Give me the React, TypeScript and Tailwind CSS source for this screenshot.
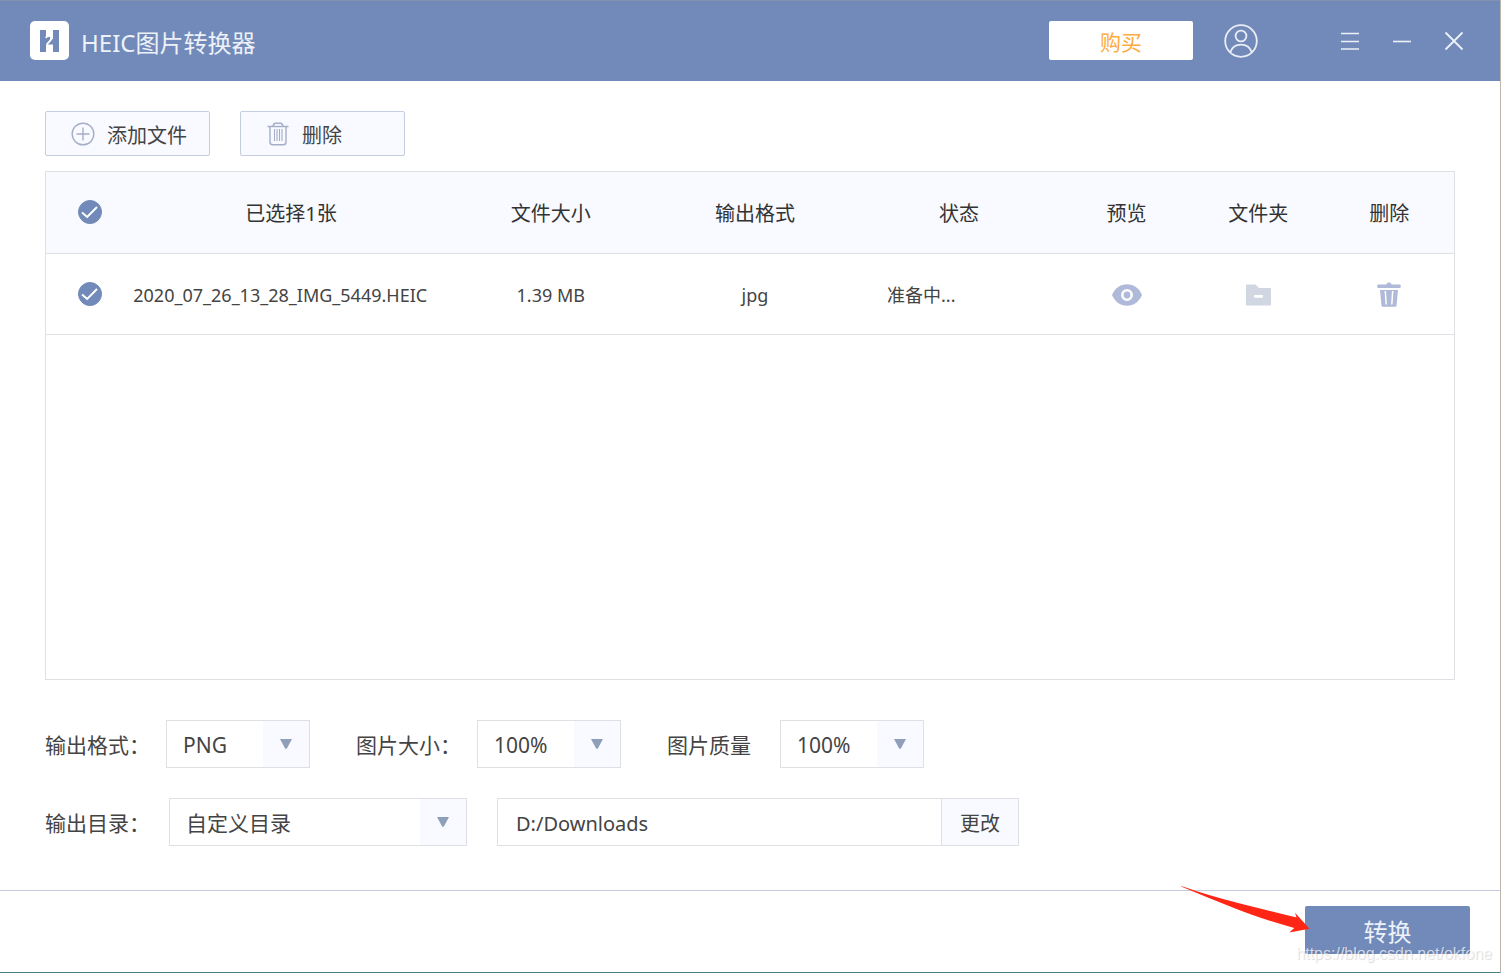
import { useState } from "react";
import type { ReactNode } from "react";

function Logo() {
  return (
    <svg viewBox="0 0 39 39" className="size-[39px]" aria-hidden="true">
      <rect width="39" height="39" rx="5" fill="#fff" />
      <path d="M10 9h6v8.500l3-2.200c1.600-1 3.200.4 2.200 2L16 24v7h-6z" fill="#728ab9" />
      <path d="M23 9h6v22h-6v-7.500h-5.200l5.200-6z" fill="#728ab9" />
      <path d="M15.600 16.600c1.600-2.600 6-2 5.400 1.200-.4 2-2.600 3.600-4.200 5.400" fill="none" stroke="#fff" strokeWidth="1.600" />
    </svg>
  );
}

function UserIcon() {
  return (
    <svg viewBox="0 0 34 34" className="size-[34px]" fill="none" stroke="#e9edf5" strokeWidth="1.8" aria-hidden="true">
      <circle cx="17" cy="17" r="15.8" />
      <circle cx="17" cy="12" r="5.4" />
      <path d="M6.2 28.300C7.800 23.600 12 20.600 17 20.600s9.200 3 10.800 7.700" />
    </svg>
  );
}

function PlusCircle() {
  return (
    <svg viewBox="0 0 24 24" className="size-6" fill="none" stroke="#a5aec8" strokeWidth="1.4" aria-hidden="true">
      <circle cx="12" cy="12" r="10.8" />
      <path d="M12 5.500v13M5.500 12h13" />
    </svg>
  );
}

function TrashOutline() {
  return (
    <svg viewBox="0 0 24 24" className="size-6" fill="none" stroke="#a5aec8" strokeWidth="1.4" aria-hidden="true">
      <path d="M1.500 4.500h21M7 4.500C7.200 2 8 1.200 9.500 1.200h5C16 1.200 16.800 2 17 4.500" />
      <path d="M4 4.500v15.500c0 1.800 1 2.800 2.800 2.800h10.400c1.800 0 2.800-1 2.800-2.800V4.500" />
      <path d="M8.500 7v12M11 7v12M13.500 7v12M16 7v12" strokeWidth="1.100" />
    </svg>
  );
}

function EyeIcon() {
  return (
    <svg viewBox="0 0 30 22" className="h-[22px] w-[30px]" aria-hidden="true">
      <path d="M0 11C3 4 8.500.3 15 .3S27 4 30 11c-3 7-8.500 10.700-15 10.700S3 18 0 11z" fill="#afb9d9" />
      <circle cx="15" cy="11" r="4.700" fill="#afb9d9" stroke="#fff" strokeWidth="2.600" />
    </svg>
  );
}

function FolderIcon() {
  return (
    <svg viewBox="0 0 25 22" className="h-[22px] w-[25px]" aria-hidden="true">
      <path d="M1 .5h8.500L13 4h11c.6 0 1 .4 1 1v15.500c0 .6-.4 1-1 1H1c-.6 0-1-.4-1-1v-19c0-.6.4-1 1-1z" fill="#d1d6e3" />
      <rect x="8" y="11" width="9" height="2.800" rx="1" fill="#fff" />
    </svg>
  );
}

function TrashSolid() {
  return (
    <svg viewBox="0 0 24 25" className="h-[25px] w-6" aria-hidden="true">
      <path d="M9.500 2.500C9.800 1 10.800.5 12 .5s2.200.5 2.500 2h8c.8 0 1.300.6 1.300 1.700s-.5 1.800-1.300 1.800h-21C.7 6 .2 5.300.2 4.200s.5-1.700 1.300-1.700z" fill="#afb9d9" />
      <path d="M3 8h18l-1.500 15.500c-.1.800-.5 1.200-1.200 1.200H5.700c-.7 0-1.100-.4-1.200-1.200z" fill="#afb9d9" />
      <path d="M8.300 9l.9 13.500M15.700 9l-.9 13.500" stroke="#fff" strokeWidth="1.500" />
    </svg>
  );
}

function RoundCheck({ label, checked, onChange }: { label: string; checked: boolean; onChange: () => void }) {
  return (
    <label className="mx-auto grid size-6 cursor-pointer place-items-center">
      <input
        type="checkbox"
        aria-label={label}
        checked={checked}
        onChange={onChange}
        className="col-start-1 row-start-1 size-6 appearance-none rounded-full border border-[#728ab9] checked:bg-[#728ab9]"
      />
      <svg viewBox="0 0 24 24" className="pointer-events-none col-start-1 row-start-1 size-6" fill="none" stroke="#fff" strokeWidth="2" aria-hidden="true">
        <path d="M4 12.500l5.200 4.500L19 7" />
      </svg>
    </label>
  );
}

function Dropdown({ id, options, width }: { id: string; options: string[]; width: string }) {
  return (
    <div className={`grid h-12 border border-[#dfe0e3] ${width}`}>
      <select id={id} className="col-start-1 row-start-1 h-full w-full appearance-none bg-transparent pt-1 pr-12 pl-4 text-[21px] text-[#444]">
        {options.map((o) => (
          <option key={o}>{o}</option>
        ))}
      </select>
      <span className="pointer-events-none col-start-1 row-start-1 flex w-[46px] items-center justify-center justify-self-end bg-[#f8faff]">
        <svg viewBox="0 0 12 10" className="h-[10px] w-3" fill="#8f9fb9" aria-hidden="true">
          <path d="M0 0h12L7 9.200q-1 1.200-2 0z" />
        </svg>
      </span>
    </div>
  );
}

function ToolButton({ icon, children }: { icon: ReactNode; children: ReactNode }) {
  return (
    <button className="flex h-[45px] w-[165px] items-center gap-3 rounded-xs border border-[#c5cde0] bg-[#f8faff] pl-[25px] text-[20px] text-[#444]">
      {icon}
      <span className="pt-1">{children}</span>
    </button>
  );
}

export default function App() {
  const [selected, setSelected] = useState(true);
  const toggle = () => setSelected(!selected);

  return (
    <div className="flex min-h-screen flex-col border-r border-b border-r-[#bdb6ad] border-b-[#4c808b] bg-white font-['Noto_Sans','Noto_Sans_CJK_SC',sans-serif] text-[#444]">
      <header className="flex h-[81px] shrink-0 items-center border-t border-[#8291ae] bg-[#728ab9] pr-9 pb-px pl-[30px] text-white">
        <Logo />
        <h1 className="ml-3 pt-1 text-[24px] leading-8 text-[#edf1f8]">HEIC图片转换器</h1>
        <div className="ml-auto flex items-center">
          <button className="h-[39px] w-36 rounded-xs bg-white pt-1 text-[21px] text-[#fdab3d]">购买</button>
          <button aria-label="账户" className="ml-[31px]">
            <UserIcon />
          </button>
          <div className="ml-[82px] flex items-center gap-8">
            <button aria-label="菜单">
              <svg viewBox="0 0 20 20" className="size-5" stroke="#edf1f8" strokeWidth="1.600" aria-hidden="true">
                <path d="M1 2.500h18M1 10.500h18M1 18h18" />
              </svg>
            </button>
            <button aria-label="最小化">
              <svg viewBox="0 0 20 20" className="size-5" stroke="#edf1f8" strokeWidth="1.600" aria-hidden="true">
                <path d="M1 10.500h18" />
              </svg>
            </button>
            <button aria-label="关闭">
              <svg viewBox="0 0 20 20" className="size-5" stroke="#edf1f8" strokeWidth="1.800" aria-hidden="true">
                <path d="M1.500 1.500l17 17M18.500 1.500l-17 17" />
              </svg>
            </button>
          </div>
        </div>
      </header>

      <main className="flex flex-1 flex-col px-[45px] pt-[30px] pb-11">
        <div className="flex gap-[30px]">
          <ToolButton icon={<PlusCircle />}>添加文件</ToolButton>
          <ToolButton icon={<TrashOutline />}>删除</ToolButton>
        </div>

        <section className="mt-[15px] flex-1 border border-[#dfe0e3]">
          <table className="w-full table-fixed border-collapse text-center">
            <colgroup>
              <col className="w-[6.2%]" />
              <col className="w-[22.4%]" />
              <col className="w-[14.5%]" />
              <col className="w-[14.5%]" />
              <col className="w-[14.5%]" />
              <col className="w-[9.3%]" />
              <col className="w-[9.4%]" />
              <col className="w-[9.2%]" />
            </colgroup>
            <thead>
              <tr className="h-[81px] border-b border-[#dfe0e3] bg-[#f8faff] text-[20px] text-[#333] *:p-0 *:font-normal">
                <th>
                  <RoundCheck label="全选" checked={selected} onChange={toggle} />
                </th>
                <th><div className="pt-1">已选择1张</div></th>
                <th><div className="pt-1">文件大小</div></th>
                <th><div className="pt-1">输出格式</div></th>
                <th><div className="pt-1">状态</div></th>
                <th><div className="pt-1">预览</div></th>
                <th><div className="pt-1">文件夹</div></th>
                <th><div className="pt-1">删除</div></th>
              </tr>
            </thead>
            <tbody>
              <tr className="h-[81px] border-b border-[#dfe0e3] text-[18px] *:p-0">
                <td>
                  <RoundCheck label="选择文件" checked={selected} onChange={toggle} />
                </td>
                <td className="text-left whitespace-nowrap"><div className="pt-1">2020_07_26_13_28_IMG_5449.HEIC</div></td>
                <td><div className="pt-1">1.39 MB</div></td>
                <td><div className="pt-1">jpg</div></td>
                <td><div className="pt-1 pl-[30px] text-left">准备中...</div></td>
                <td>
                  <button aria-label="预览" className="align-middle">
                    <EyeIcon />
                  </button>
                </td>
                <td>
                  <button aria-label="打开文件夹" className="align-middle">
                    <FolderIcon />
                  </button>
                </td>
                <td>
                  <button aria-label="删除文件" className="align-middle">
                    <TrashSolid />
                  </button>
                </td>
              </tr>
            </tbody>
          </table>
        </section>

        <div className="mt-10 flex items-center text-[21px]">
          <label htmlFor="format" className="w-[121px] pt-1">输出格式：</label>
          <Dropdown id="format" options={["PNG", "JPG"]} width="w-36" />
          <label htmlFor="size" className="ml-[46px] w-[121px] pt-1">图片大小：</label>
          <Dropdown id="size" options={["100%", "75%", "50%"]} width="w-36" />
          <label htmlFor="quality" className="ml-[46px] w-[113px] pt-1">图片质量</label>
          <Dropdown id="quality" options={["100%", "75%", "50%"]} width="w-36" />
        </div>
        <div className="mt-[30px] flex items-center text-[21px]">
          <label htmlFor="target" className="w-[124px] pt-1">输出目录：</label>
          <Dropdown id="target" options={["自定义目录", "原文件目录"]} width="w-[298px]" />
          <div className="ml-[30px] flex h-12 w-[522px] border border-[#dfe0e3]">
            <input aria-label="目录路径" defaultValue="D:/Downloads" className="min-w-0 flex-1 pt-1 pl-[18px] text-[20px]" />
            <button className="w-[77px] border-l border-[#dfe0e3] bg-[#f8faff] pt-1 text-[20px]">更改</button>
          </div>
        </div>
      </main>

      <footer className="relative flex h-[82px] shrink-0 justify-end border-t border-[#c3cbdc] pt-[15px] pr-[30px]">
        <div className="relative h-12">
          <button className="h-12 w-[165px] rounded-xs bg-[#728ab9] pt-1 text-[24px] text-[#edf1f8]">转换</button>
          <svg viewBox="0 0 130 47" className="pointer-events-none absolute -top-5 -left-[125px] h-[47px] w-[130px]" fill="#ff2616" aria-hidden="true">
            <path d="M.5.3Q2 0 3.500.8 28 9.500 60 17.500L116.500 31.500 115 26.800 129.500 42.800 109.300 46.500 114.300 42Q80 32.500 54 22 27 11.500.5.3z" />
          </svg>
        </div>
        <span className="pointer-events-none absolute right-2 bottom-[6px] font-['Liberation_Sans',sans-serif] text-[16px] leading-6 text-white/70 [text-shadow:1px_1px_1px_rgba(0,0,0,0.15)]">
          https://blog.csdn.net/okfone
        </span>
      </footer>
    </div>
  );
}
